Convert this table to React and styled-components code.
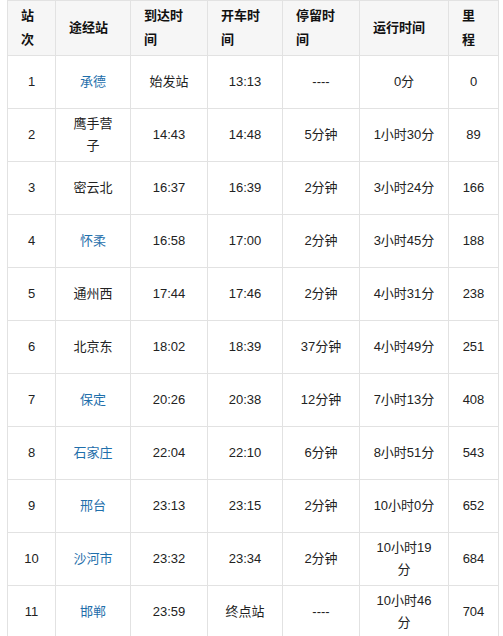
import React from 'react';
import styled, { createGlobalStyle } from 'styled-components';

const rows = [
    { no: 1, name: '承德', link: true, arrive: '始发站', depart: '13:13', stay: '----', run: '0分', km: 0 },
    { no: 2, name: '鹰手营子', arrive: '14:43', depart: '14:48', stay: '5分钟', run: '1小时30分', km: 89 },
    { no: 3, name: '密云北', arrive: '16:37', depart: '16:39', stay: '2分钟', run: '3小时24分', km: 166 },
    { no: 4, name: '怀柔', link: true, arrive: '16:58', depart: '17:00', stay: '2分钟', run: '3小时45分', km: 188 },
    { no: 5, name: '通州西', arrive: '17:44', depart: '17:46', stay: '2分钟', run: '4小时31分', km: 238 },
    { no: 6, name: '北京东', arrive: '18:02', depart: '18:39', stay: '37分钟', run: '4小时49分', km: 251 },
    { no: 7, name: '保定', link: true, arrive: '20:26', depart: '20:38', stay: '12分钟', run: '7小时13分', km: 408 },
    { no: 8, name: '石家庄', link: true, arrive: '22:04', depart: '22:10', stay: '6分钟', run: '8小时51分', km: 543 },
    { no: 9, name: '邢台', link: true, arrive: '23:13', depart: '23:15', stay: '2分钟', run: '10小时0分', km: 652 },
    { no: 10, name: '沙河市', link: true, arrive: '23:32', depart: '23:34', stay: '2分钟', run: '10小时19分', km: 684 },
    { no: 11, name: '邯郸', link: true, arrive: '23:59', depart: '终点站', stay: '----', run: '10小时46分', km: 704 },
];

const headers = ['站次', '途经站', '到达时间', '开车时间', '停留时间', '运行时间', '里程'];
const widths = [48, 75, 77, 75, 77, 89, 50];

const App = () => {
    return (
        <>
            <GlobalStyle />
            <Wrap>
                <Table>
                    <colgroup>
                        {widths.map((w, i) => <col key={i} width={w} />)}
                    </colgroup>
                    <thead>
                        <tr>
                            {headers.map(h => <Th key={h}>{h}</Th>)}
                        </tr>
                    </thead>
                    <tbody>
                        {rows.map(r => (
                            <tr key={r.no}>
                                <Td>{r.no}</Td>
                                <Td>{r.link ? <StationLink>{r.name}</StationLink> : r.name}</Td>
                                <Td>{r.arrive}</Td>
                                <Td>{r.depart}</Td>
                                <Td>{r.stay}</Td>
                                <Td>{r.run}</Td>
                                <Td>{r.km}</Td>
                            </tr>
                        ))}
                    </tbody>
                </Table>
            </Wrap>
        </>
    );
};

export default App;

const GlobalStyle = createGlobalStyle`
    body {
        margin:0;
        background:#fff;
        font-family:"Liberation Sans", "Noto Sans CJK SC", sans-serif;
    }
`
const Wrap = styled.div`
    padding:0 0 0 7px;
`
const Table = styled.table`
    border-collapse:collapse;
    table-layout:fixed;
    width:491px;
    font-size:13px;
    color:#222;
`
const Th = styled.th`
    height:47px;
    padding:3px 13px;
    background:#f6f6f6;
    border:1px solid #e2e2e2;
    text-align:left;
    font-weight:700;
    line-height:24px;
    color:#111;
    vertical-align:middle;
`
const Td = styled.td`
    height:44px;
    padding:4px 13px;
    border:1px solid #e2e2e2;
    text-align:center;
    line-height:22px;
    vertical-align:middle;
`
const StationLink = styled.a`
    color:#1f6fab;
    text-decoration:none;
    cursor:pointer;
`
